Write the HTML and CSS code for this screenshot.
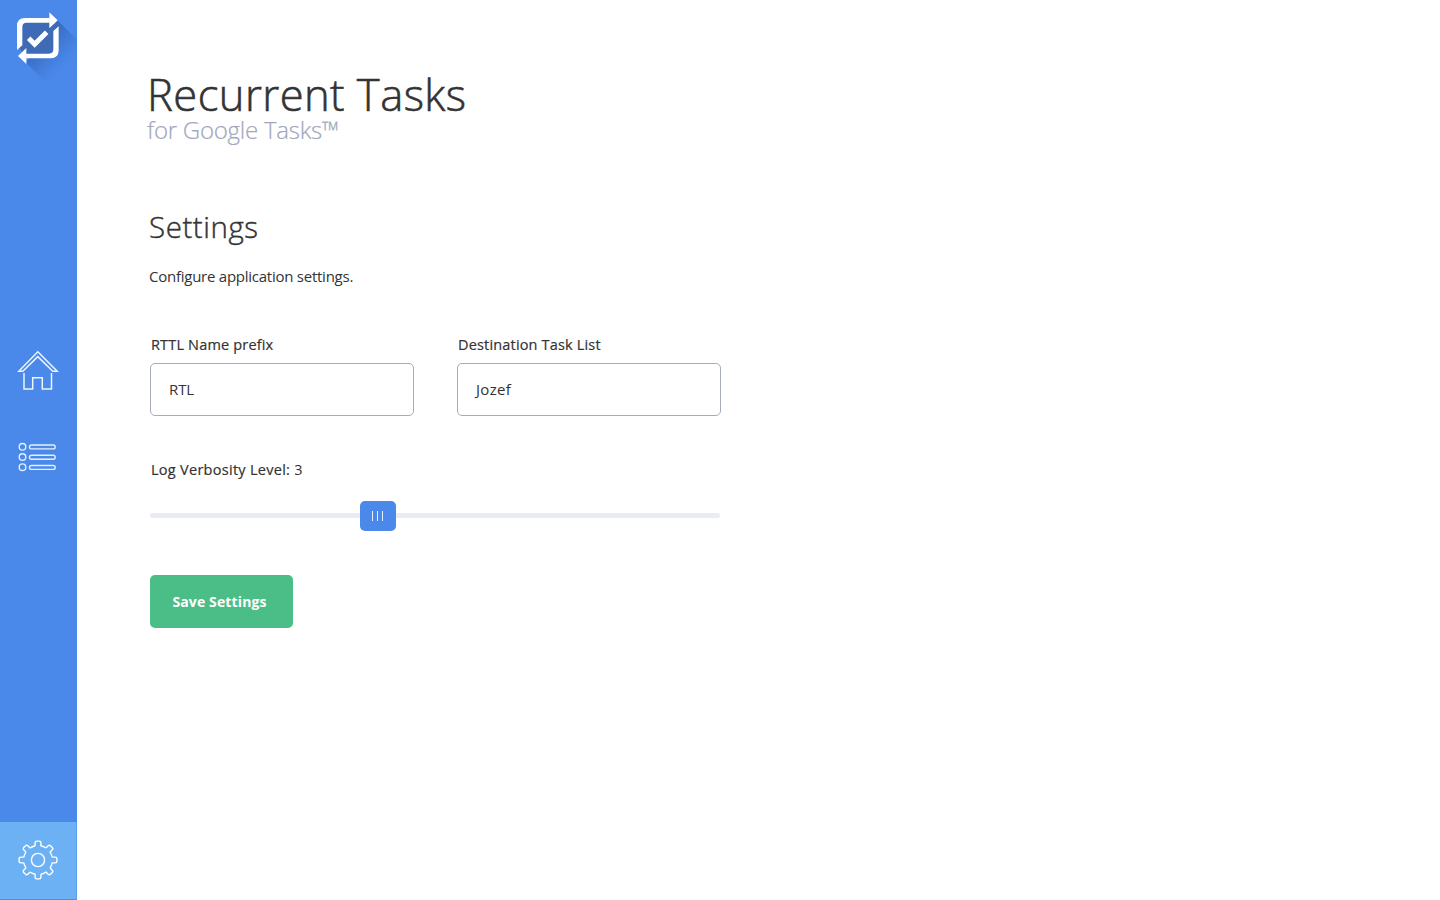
FILE: index.html
```html
<!DOCTYPE html>
<html lang="en">
<head>
<meta charset="utf-8">
<title>Recurrent Tasks – Settings</title>
<link rel="stylesheet" href="styles.css">
</head>
<body>
<div class="app">
  <nav class="sidebar">
    <a class="logo" href="#" aria-label="Recurrent Tasks">
      <svg width="77" height="90" viewBox="0 0 231 270">
        <defs>
          <linearGradient id="shade" gradientUnits="userSpaceOnUse" x1="125" y1="125" x2="200" y2="200">
            <stop offset="0" stop-color="#3465b4" stop-opacity=".85"/>
            <stop offset="1" stop-color="#3c76d4" stop-opacity="0"/>
          </linearGradient>
        </defs>
        <path d="M172 61 231 119V270H160L78 188Z" fill="url(#shade)"/>
        <path d="M60 75Q60 62 72 62H154L169 88V150Q169 168 151 168H72L60 145Z" fill="#3f6bb6"/>
        <g id="arrow" fill="#fff">
          <path d="M51 150V78Q51 54 75 54H148V37L173 61 148 85V68H80Q67 68 67 81V136Z"/>
        </g>
        <use href="#arrow" transform="rotate(180 113.5 114.5)"/>
        <path d="M86 115 104 133 140 97" fill="none" stroke="#fff" stroke-width="15"/>
      </svg>
    </a>
    <div class="menu">
      <a href="#" aria-label="Home">
        <svg width="77" height="60" viewBox="0 0 77 60" fill="none" stroke="#eef4fd" stroke-width="1.5">
          <path d="M18.8 31.2 37.8 11.8 57.2 31.2H52.8L37.8 16.6 22.8 31.2Z"/>
          <path d="M24 33V49H32.7V37.7H42.3V49H51.5V33"/>
        </svg>
      </a>
      <a href="#" aria-label="Task lists">
        <svg width="77" height="60" viewBox="0 0 77 60" fill="none" stroke="#e5effd" stroke-width="1.4">
          <circle cx="22.5" cy="16.8" r="3.3"/><circle cx="22.5" cy="27" r="3.3"/><circle cx="22.5" cy="37.2" r="3.3"/>
          <rect x="29.5" y="15" width="25.7" height="3.9" rx="1.95"/>
          <rect x="29.5" y="25.3" width="25.7" height="3.9" rx="1.95"/>
          <rect x="29.5" y="35.5" width="25.7" height="3.9" rx="1.95"/>
        </svg>
      </a>
    </div>
    <a class="active" href="#" aria-label="Settings">
      <svg width="76" height="76" viewBox="-38 -38 76 76" fill="none" stroke="#fff" stroke-width="1.4">
        <path id="tooth" d="M-2.9-14.2V-17.3Q-2.9-18.9-1.3-18.9H1.3Q2.9-18.9 2.9-17.3V-14.2Q5.5-13.5 8-12.1"/>
        <use href="#tooth" transform="rotate(45)"/><use href="#tooth" transform="rotate(90)"/>
        <use href="#tooth" transform="rotate(135)"/><use href="#tooth" transform="rotate(180)"/>
        <use href="#tooth" transform="rotate(225)"/><use href="#tooth" transform="rotate(270)"/>
        <use href="#tooth" transform="rotate(315)"/>
        <circle r="6.6"/>
      </svg>
    </a>
  </nav>
  <main class="content">
    <header>
      <h1>Recurrent Tasks</h1>
      <p class="subtitle">for Google Tasks™</p>
    </header>
    <h2>Settings</h2>
    <p class="intro">Configure application settings.</p>
    <form>
      <div class="fields">
        <div class="field">
          <label class="label">RTTL Name prefix</label>
          <div class="input">RTL</div>
        </div>
        <div class="field">
          <label class="label">Destination Task List</label>
          <div class="input jozef">Jozef</div>
        </div>
      </div>
      <label class="label log">Log Verbosity Level: <span class="value">3</span></label>
      <div class="slider"><div class="track"></div><div class="thumb"><i></i><i></i><i></i></div><div class="track rest"></div></div>
      <button class="save" type="button">Save Settings</button>
    </form>
  </main>
</div>
</body>
</html>
```
FILE: styles.css
```css
* { box-sizing: border-box; }
body { margin: 0; background: #fff; color: #333; font-family: "Open Sans", "Noto Sans", sans-serif; }
h1, h2, p { margin: 0; font-weight: 300; white-space: nowrap; }
svg { display: block; }
.app { display: flex; height: 900px; }
.sidebar { width: 77px; background: #4a88ea; display: flex; flex-direction: column; flex: none; }
.logo { height: 90px; }
.menu { flex: 1; display: flex; flex-direction: column; gap: 30px; padding-top: 250px; }
.menu a { height: 60px; }
.active { height: 78px; width: 77px; background: #6cb1f4; border-right: 1px solid #5a9df0; border-bottom: 1px solid #4a90e0; }
.content { padding: 64px 0 0 71px; }
h1 { font-size: 43.5px; line-height: 62px; letter-spacing: .45px; margin-left: -1px; -webkit-text-stroke: .6px #333; }
.subtitle { font-size: 24px; line-height: 32px; color: #a1a8bb; letter-spacing: -.25px; margin: -12px 0 0 -1px; -webkit-text-stroke: .2px #a1a8bb; }
h2 { font-size: 29.5px; line-height: 40px; margin: 61px 0 0 1px; letter-spacing: .55px; -webkit-text-stroke: .4px #333; }
.intro { font-size: 15px; line-height: 22px; margin: 18px 0 0 1px; font-weight: 400; letter-spacing: -.25px; }
form { margin: 47px 0 0 2px; }
.fields { display: flex; gap: 43px; }
.field { width: 264px; }
.label { display: block; font-size: 14.5px; line-height: 22px; margin-left: 1px; white-space: nowrap; letter-spacing: .17px; -webkit-text-stroke: .2px #333; }
.input { height: 53px; margin-top: 7px; border: 1px solid #a5abbb; border-radius: 5px; padding: 0 18px; font-size: 15px; line-height: 50px; letter-spacing: -.1px; }
.jozef { letter-spacing: .3px; }
.log { margin-top: 43px; letter-spacing: .28px; }
.value { -webkit-text-stroke: 0; }
.slider { width: 570px; height: 30px; margin-top: 20px; display: flex; align-items: center; }
.track { width: 210px; height: 5px; margin-bottom: 1px; background: #eaecf4; border-radius: 3px 0 0 3px; }
.rest { width: 324px; border-radius: 0 3px 3px 0; }
.thumb { width: 36px; height: 30px; padding: 0 1px 1px 0; border-radius: 5px; background: #4a88ea; display: flex; gap: 4px; justify-content: center; align-items: center; }
.thumb i { width: 1px; height: 10px; background: #e6effd; }
.save { display: block; width: 143px; height: 53px; margin-top: 44px; padding: 0 4px 0 0; border: 0; border-radius: 5px; background: #4bbe88; color: #fff; font: 700 14px/53px "Open Sans", "Noto Sans", sans-serif; letter-spacing: .13px; white-space: nowrap; }
```
